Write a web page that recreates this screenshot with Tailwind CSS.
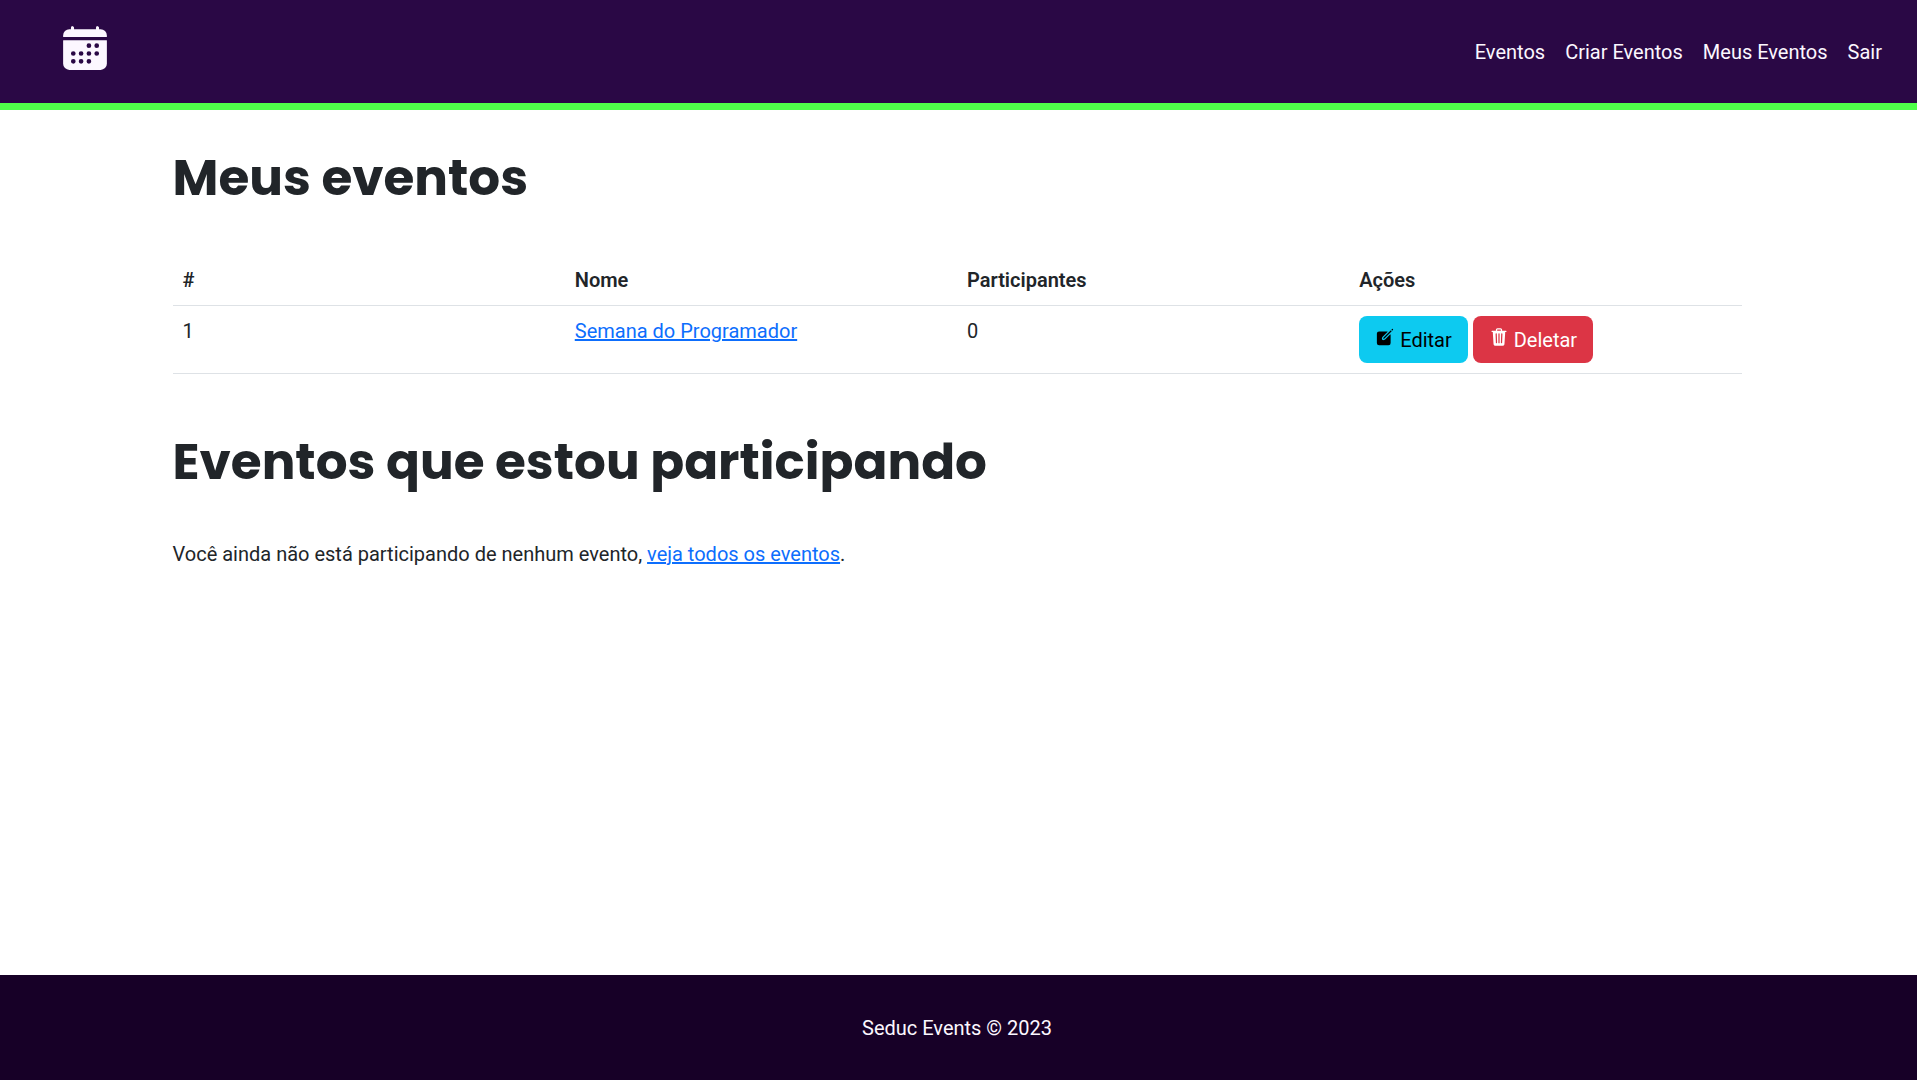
<!DOCTYPE html>
<html lang="pt-BR">
<head>
<meta charset="utf-8">
<meta name="viewport" content="width=device-width, initial-scale=1">
<title>Meus eventos</title>
<script src="https://cdn.jsdelivr.net/npm/@tailwindcss/browser@4"></script>
</head>
<body class="flex min-h-screen flex-col bg-white font-[Roboto,sans-serif] text-[20px] leading-[30px] text-[#212529]">
  <header class="border-b-[7px] border-[#4fff4a] bg-[#2a0845]">
    <nav class="flex h-[103px] items-center justify-between pr-[35px] pl-[60px] text-[#fcf7ff]">
      <a href="#" aria-label="Início" class="mb-2">
        <svg class="size-[50px]" viewBox="0 0 512 512" fill="currentColor" aria-hidden="true">
          <path d="M480 128a64 64 0 00-64-64h-16V48.45c0-8.61-6.62-16-15.23-16.43A16 16 0 00368 48v16H144V48.45c0-8.61-6.62-16-15.23-16.43A16 16 0 00112 48v16H96a64 64 0 00-64 64v12a4 4 0 004 4h440a4 4 0 004-4z"/>
          <path fill-rule="evenodd" d="M32 416a64 64 0 0064 64h320a64 64 0 0064-64V179a3 3 0 00-3-3H35a3 3 0 00-3 3zM272 232a24 24 0 1048 0a24 24 0 10-48 0zM352 232a24 24 0 1048 0a24 24 0 10-48 0zM112 312a24 24 0 1048 0a24 24 0 10-48 0zM192 312a24 24 0 1048 0a24 24 0 10-48 0zM272 312a24 24 0 1048 0a24 24 0 10-48 0zM352 312a24 24 0 1048 0a24 24 0 10-48 0zM112 392a24 24 0 1048 0a24 24 0 10-48 0zM192 392a24 24 0 1048 0a24 24 0 10-48 0zM272 392a24 24 0 1048 0a24 24 0 10-48 0z"/>
        </svg>
      </a>
      <ul class="flex gap-5">
        <li><a href="#">Eventos</a></li>
        <li><a href="#">Criar Eventos</a></li>
        <li><a href="#">Meus Eventos</a></li>
        <li><a href="#">Sair</a></li>
      </ul>
    </nav>
  </header>

  <main class="grow pr-[3px]">
    <div class="mx-auto w-10/12 px-[13px] pt-[38px]">
      <h1 class="font-[Poppins,Inter,sans-serif] text-[50px] leading-[60px] font-bold">Meus eventos</h1>
      <table class="mt-[47px] w-full table-fixed border-collapse text-left">
        <thead>
          <tr class="border-b border-[#dee2e6]">
            <th scope="col" class="p-[10px] font-semibold">#</th>
            <th scope="col" class="p-[10px] font-semibold">Nome</th>
            <th scope="col" class="p-[10px] font-semibold">Participantes</th>
            <th scope="col" class="p-[10px] font-semibold">Ações</th>
          </tr>
        </thead>
        <tbody>
          <tr class="border-b border-[#dee2e6] align-top">
            <td class="p-[10px]">1</td>
            <td class="p-[10px]"><a href="#" class="text-[#0d6efd] underline">Semana do Programador</a></td>
            <td class="p-[10px]">0</td>
            <td class="p-[10px]">
              <div class="flex gap-[5px]">
                <a href="#" class="rounded-lg bg-[#0dcaf0] px-4 pt-[9px] pb-[8px] text-black"><svg class="inline size-5 align-baseline" viewBox="0 0 512 512" fill="currentColor" aria-hidden="true"><path d="M459.94 53.25a16.06 16.06 0 00-23.22-.56L424.35 65a8 8 0 000 11.31l11.34 11.32a8 8 0 0011.34 0l12.06-12c6.1-6.09 6.67-16.01.85-22.38zM399.34 90L218.82 270.2a9 9 0 00-2.31 3.93L208.16 299a3.91 3.91 0 004.86 4.86l24.85-8.35a9 9 0 003.93-2.31L422 112.66a9 9 0 000-12.66l-9.95-10a9 9 0 00-12.71 0z"/><path d="M386.34 193.66L264.45 315.79A41.08 41.08 0 01247.58 326l-25.9 8.67a35.92 35.92 0 01-44.33-44.33l8.67-25.9a41.08 41.08 0 0110.19-16.87l122.13-121.91a8 8 0 00-5.65-13.66H104a56 56 0 00-56 56v240a56 56 0 0056 56h240a56 56 0 0056-56V199.31a8 8 0 00-13.66-5.65z"/></svg> Editar</a>
                <button type="button" class="rounded-lg bg-[#dc3545] px-4 pt-[9px] pb-[8px] text-white"><svg class="inline size-5 align-baseline" viewBox="0 0 512 512" fill="currentColor" aria-hidden="true"><path d="M432 96h-96V72a40 40 0 00-40-40h-80a40 40 0 00-40 40v24H80a16 16 0 000 32h17l19 304.92c1.42 26.85 22 47.08 48 47.08h184c26.13 0 46.3-19.78 48-47l19-305h17a16 16 0 000-32zM192.57 416H192a16 16 0 01-16-15.43l-8-224a16 16 0 1132-1.14l8 224A16 16 0 01192.57 416zM272 400a16 16 0 01-32 0V176a16 16 0 0132 0zm32-304h-96V72a7.91 7.91 0 018-8h80a7.91 7.91 0 018 8zm32 304.57A16 16 0 01320 416h-.58A16 16 0 01304 399.43l8-224a16 16 0 1132 1.14z"/></svg> Deletar</button>
              </div>
            </td>
          </tr>
        </tbody>
      </table>
      <h1 class="mt-[58px] font-[Poppins,Inter,sans-serif] text-[50px] leading-[60px] font-bold">Eventos que estou participando</h1>
      <p class="mt-[47px]">Você ainda não está participando de nenhum evento, <a href="#" class="text-[#0d6efd] underline">veja todos os eventos</a>.</p>
    </div>
  </main>

  <footer class="flex h-[105px] items-center justify-center bg-[#170027] pr-[3px] text-[#fcf7ff]">
    <p>Seduc Events © 2023</p>
  </footer>
</body>
</html>
